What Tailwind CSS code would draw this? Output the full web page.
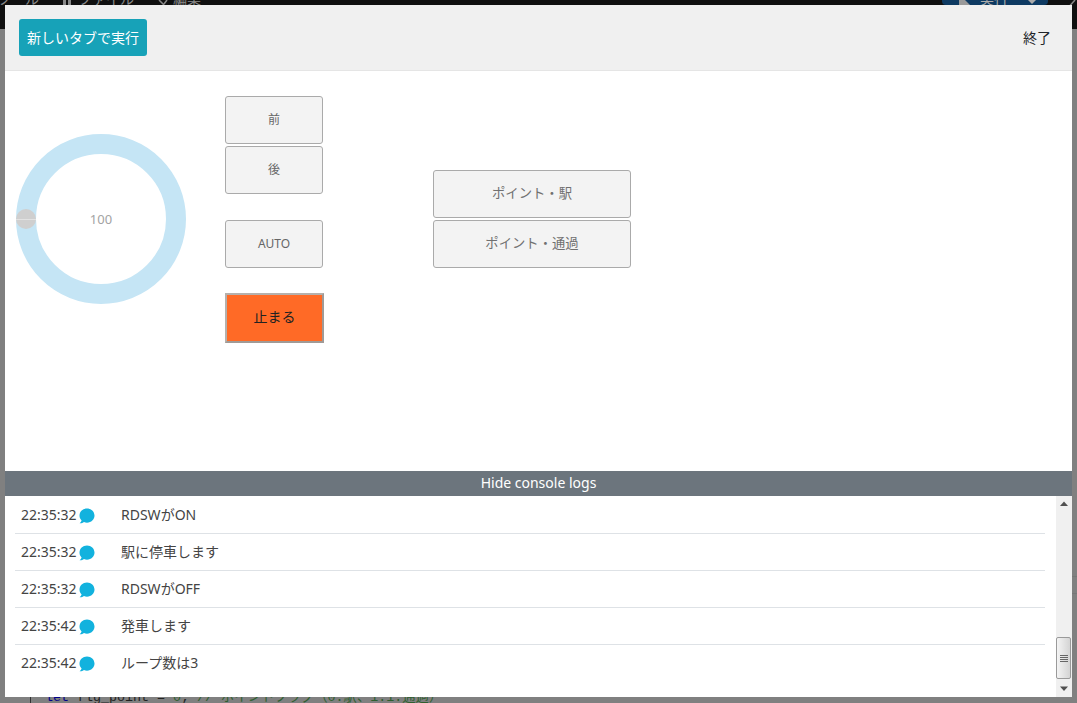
<!doctype html>
<html lang="ja">
<head>
<meta charset="utf-8">
<script src="https://cdn.jsdelivr.net/npm/@tailwindcss/browser@4"></script>
</head>
<body class="w-[1077px] h-[703px] overflow-hidden bg-[#808080] font-['Noto_Sans','Noto_Sans_CJK_JP',sans-serif]">
<div class="relative w-[1077px] h-[703px] overflow-hidden">
  <!-- page behind the modal -->
  <div class="absolute left-0 top-0 w-full h-[29px] bg-[#101010] overflow-hidden">
    <span class="absolute left-[-3px] top-[-9px] whitespace-nowrap text-[14px] leading-[16px] text-[#888]">ツール</span>
    <svg class="absolute left-[62px] top-0 w-[10px] h-[5px]" viewBox="0 0 10 5"><path fill="#888" d="M1 0H4V5H1ZM6 0H9V5H6Z"/></svg>
    <span class="absolute left-[78px] top-[-9px] whitespace-nowrap text-[14px] leading-[16px] text-[#888]">ファイル</span>
    <svg class="absolute left-[156px] top-0 w-[12px] h-[5px]" viewBox="0 0 12 5"><path fill="none" stroke="#888" stroke-width="1.5" d="M3 0L8 5M11 0L8 4"/></svg>
    <span class="absolute left-[173px] top-[-9px] whitespace-nowrap text-[14px] leading-[16px] text-[#888]">編集</span>
    <div class="absolute left-[942px] top-[-12px] w-[106px] h-[17px] bg-[#0e3a62] rounded-[4px]">
      <svg class="absolute left-[16px] top-[12px] w-[14px] h-[5px]" viewBox="0 0 14 5"><path fill="#999" d="M1 0H7L12 5H1Z"/></svg>
      <span class="absolute left-[38px] top-[3px] whitespace-nowrap text-[14px] leading-[16px] text-[#aaa]">実行</span>
      <svg class="absolute left-[85px] top-[12px] w-[10px] h-[5px]" viewBox="0 0 10 5"><path fill="#aaa" d="M1 0H9L5 4Z"/></svg>
    </div>
    <svg class="absolute left-[1065px] top-0 w-[12px] h-[10px]" viewBox="0 0 12 10"><path fill="none" stroke="#888" stroke-width="1.5" d="M2 9L10 0"/></svg>
  </div>
  <div class="absolute left-[30px] top-[690px] h-[13px] w-[1px] bg-[#333]"></div>
  <div class="absolute right-0 top-[576px] h-[1px] w-[5px] bg-[#777]"></div>
  <div class="absolute right-0 top-[593px] h-[1px] w-[5px] bg-[#777]"></div>
  <div class="absolute left-[45px] top-[690px] whitespace-nowrap font-['Liberation_Mono','Noto_Sans_CJK_JP',monospace] text-[13.33px] leading-[16px] text-[#222]"><span class="text-[#00008b]">let</span> flg_point = <span class="text-[#2f5f2f]">0<span class="text-[#222]">;</span> // ポイントフラグ（0:駅、1:1:通過）</span></div>

  <!-- modal -->
  <div class="absolute left-[5px] top-[5px] w-[1067px] h-[692px] flex flex-col bg-white overflow-hidden">
    <header class="h-[66px] shrink-0 flex items-center justify-between bg-[#f0f0f0] border-b border-[#e5e5e5] pl-[14px] pr-[21px]">
      <button class="w-[128px] h-[37px] rounded-[3px] bg-[#17a2b8] text-white text-[14px]">新しいタブで実行</button>
      <span class="text-[14px] text-[#212529]">終了</span>
    </header>

    <main class="h-[400px] shrink-0 flex">
      <div class="w-[220px] shrink-0 pl-[11px] pt-[63px]">
        <div class="relative w-[170px] h-[170px] rounded-full border-[20px] border-[#c5e5f5] flex items-center justify-center">
          <span class="mt-[1px] text-[13px] text-[#a3a3a3]">100</span>
          <span class="absolute left-[-20px] top-[55px] w-[20px] h-[20px] rounded-full bg-[#cfcfcf] flex items-center"><span class="block w-full h-[1px] bg-[#e2e2e2]"></span></span>
        </div>
      </div>

      <div class="w-[208px] shrink-0 flex flex-col pt-[25px]">
        <button class="w-[98px] h-[48px] rounded-[3px] border border-[#aaa] bg-[#f3f3f3] text-[12px] text-[#666]">前</button>
        <button class="mt-[2px] w-[98px] h-[48px] rounded-[3px] border border-[#aaa] bg-[#f3f3f3] text-[12px] text-[#666]">後</button>
        <button class="mt-[26px] w-[98px] h-[48px] rounded-[3px] border border-[#aaa] bg-[#f3f3f3] text-[12px] text-[#666]">AUTO</button>
        <button class="mt-[25px] pb-[3px] w-[99px] h-[50px] border-2 border-t-[#b5b0ac] border-l-[#b5b0ac] border-r-[#a09a96] border-b-[#a09a96] bg-[#ff6a26] text-[14px] text-[#222]">止まる</button>
      </div>

      <div class="flex flex-col pt-[99px]">
        <button class="w-[198px] h-[48px] rounded-[3px] border border-[#aaa] bg-[#f3f3f3] text-[13.33px] text-[#707070]">ポイント・駅</button>
        <button class="mt-[2px] w-[198px] h-[48px] rounded-[3px] border border-[#aaa] bg-[#f3f3f3] text-[13.33px] text-[#707070]">ポイント・通過</button>
      </div>
    </main>

    <div class="h-[25px] shrink-0 flex items-center justify-center pb-[2px] bg-[#6c757d] text-white text-[14px]">Hide console logs</div>

    <section class="flex-1 min-h-0 flex">
      <ul class="w-[1040px] shrink-0 pl-[10px] pt-[1px] text-[14px] text-[#444]">
        <li class="h-[37px] w-[1030px] flex items-center border-b border-[#dee2e6] pl-[6px] pb-[2px]"><span class="w-[54px]">22:35:32</span><svg class="w-[16px] h-[16px] ml-[4px] mt-[3px]" viewBox="0 0 16 16"><path fill="#12b2de" d="M8 0.5C12.2 0.5 15.5 3.6 15.5 7.6C15.5 11.6 12.2 14.7 8 14.7C6.9 14.7 5.9 14.5 5 14.1C3.9 14.9 2.4 15.4 0.6 15.3C1.6 14.5 2.3 13.6 2.6 12.5C1.2 11.2 0.5 9.5 0.5 7.6C0.5 3.6 3.8 0.5 8 0.5Z"/></svg><span class="ml-[26px]">RDSWがON</span></li>
        <li class="h-[37px] w-[1030px] flex items-center border-b border-[#dee2e6] pl-[6px] pb-[2px]"><span class="w-[54px]">22:35:32</span><svg class="w-[16px] h-[16px] ml-[4px] mt-[3px]" viewBox="0 0 16 16"><path fill="#12b2de" d="M8 0.5C12.2 0.5 15.5 3.6 15.5 7.6C15.5 11.6 12.2 14.7 8 14.7C6.9 14.7 5.9 14.5 5 14.1C3.9 14.9 2.4 15.4 0.6 15.3C1.6 14.5 2.3 13.6 2.6 12.5C1.2 11.2 0.5 9.5 0.5 7.6C0.5 3.6 3.8 0.5 8 0.5Z"/></svg><span class="ml-[26px]">駅に停車します</span></li>
        <li class="h-[37px] w-[1030px] flex items-center border-b border-[#dee2e6] pl-[6px] pb-[2px]"><span class="w-[54px]">22:35:32</span><svg class="w-[16px] h-[16px] ml-[4px] mt-[3px]" viewBox="0 0 16 16"><path fill="#12b2de" d="M8 0.5C12.2 0.5 15.5 3.6 15.5 7.6C15.5 11.6 12.2 14.7 8 14.7C6.9 14.7 5.9 14.5 5 14.1C3.9 14.9 2.4 15.4 0.6 15.3C1.6 14.5 2.3 13.6 2.6 12.5C1.2 11.2 0.5 9.5 0.5 7.6C0.5 3.6 3.8 0.5 8 0.5Z"/></svg><span class="ml-[26px]">RDSWがOFF</span></li>
        <li class="h-[37px] w-[1030px] flex items-center border-b border-[#dee2e6] pl-[6px] pb-[2px]"><span class="w-[54px]">22:35:42</span><svg class="w-[16px] h-[16px] ml-[4px] mt-[3px]" viewBox="0 0 16 16"><path fill="#12b2de" d="M8 0.5C12.2 0.5 15.5 3.6 15.5 7.6C15.5 11.6 12.2 14.7 8 14.7C6.9 14.7 5.9 14.5 5 14.1C3.9 14.9 2.4 15.4 0.6 15.3C1.6 14.5 2.3 13.6 2.6 12.5C1.2 11.2 0.5 9.5 0.5 7.6C0.5 3.6 3.8 0.5 8 0.5Z"/></svg><span class="ml-[26px]">発車します</span></li>
        <li class="h-[37px] w-[1030px] flex items-center pl-[6px] pb-[2px]"><span class="w-[54px]">22:35:42</span><svg class="w-[16px] h-[16px] ml-[4px] mt-[3px]" viewBox="0 0 16 16"><path fill="#12b2de" d="M8 0.5C12.2 0.5 15.5 3.6 15.5 7.6C15.5 11.6 12.2 14.7 8 14.7C6.9 14.7 5.9 14.5 5 14.1C3.9 14.9 2.4 15.4 0.6 15.3C1.6 14.5 2.3 13.6 2.6 12.5C1.2 11.2 0.5 9.5 0.5 7.6C0.5 3.6 3.8 0.5 8 0.5Z"/></svg><span class="ml-[26px]">ループ数は3</span></li>
      </ul>
      <div class="ml-auto w-[16px] flex flex-col bg-[#f0f0f0]">
        <svg class="w-[16px] h-[16px]" viewBox="0 0 16 16"><path fill="#505050" d="M8 5.5 L12 10 H4Z"/></svg>
        <div class="mt-auto h-[42px] w-[15px] rounded-[2px] border border-[#9a9a9a] bg-gradient-to-r from-[#f4f4f4] to-[#d4d4d4] flex flex-col items-center justify-center gap-[1px]">
          <span class="block w-[8px] h-[1px] bg-[#666]"></span><span class="block w-[8px] h-[1px] bg-[#666]"></span><span class="block w-[8px] h-[1px] bg-[#666]"></span><span class="block w-[8px] h-[1px] bg-[#666]"></span>
        </div>
        <svg class="w-[16px] h-[18px]" viewBox="0 0 16 18"><path fill="#505050" d="M8 12 L4 7.5 H12Z"/></svg>
      </div>
    </section>
  </div>
</div>
</body>
</html>
